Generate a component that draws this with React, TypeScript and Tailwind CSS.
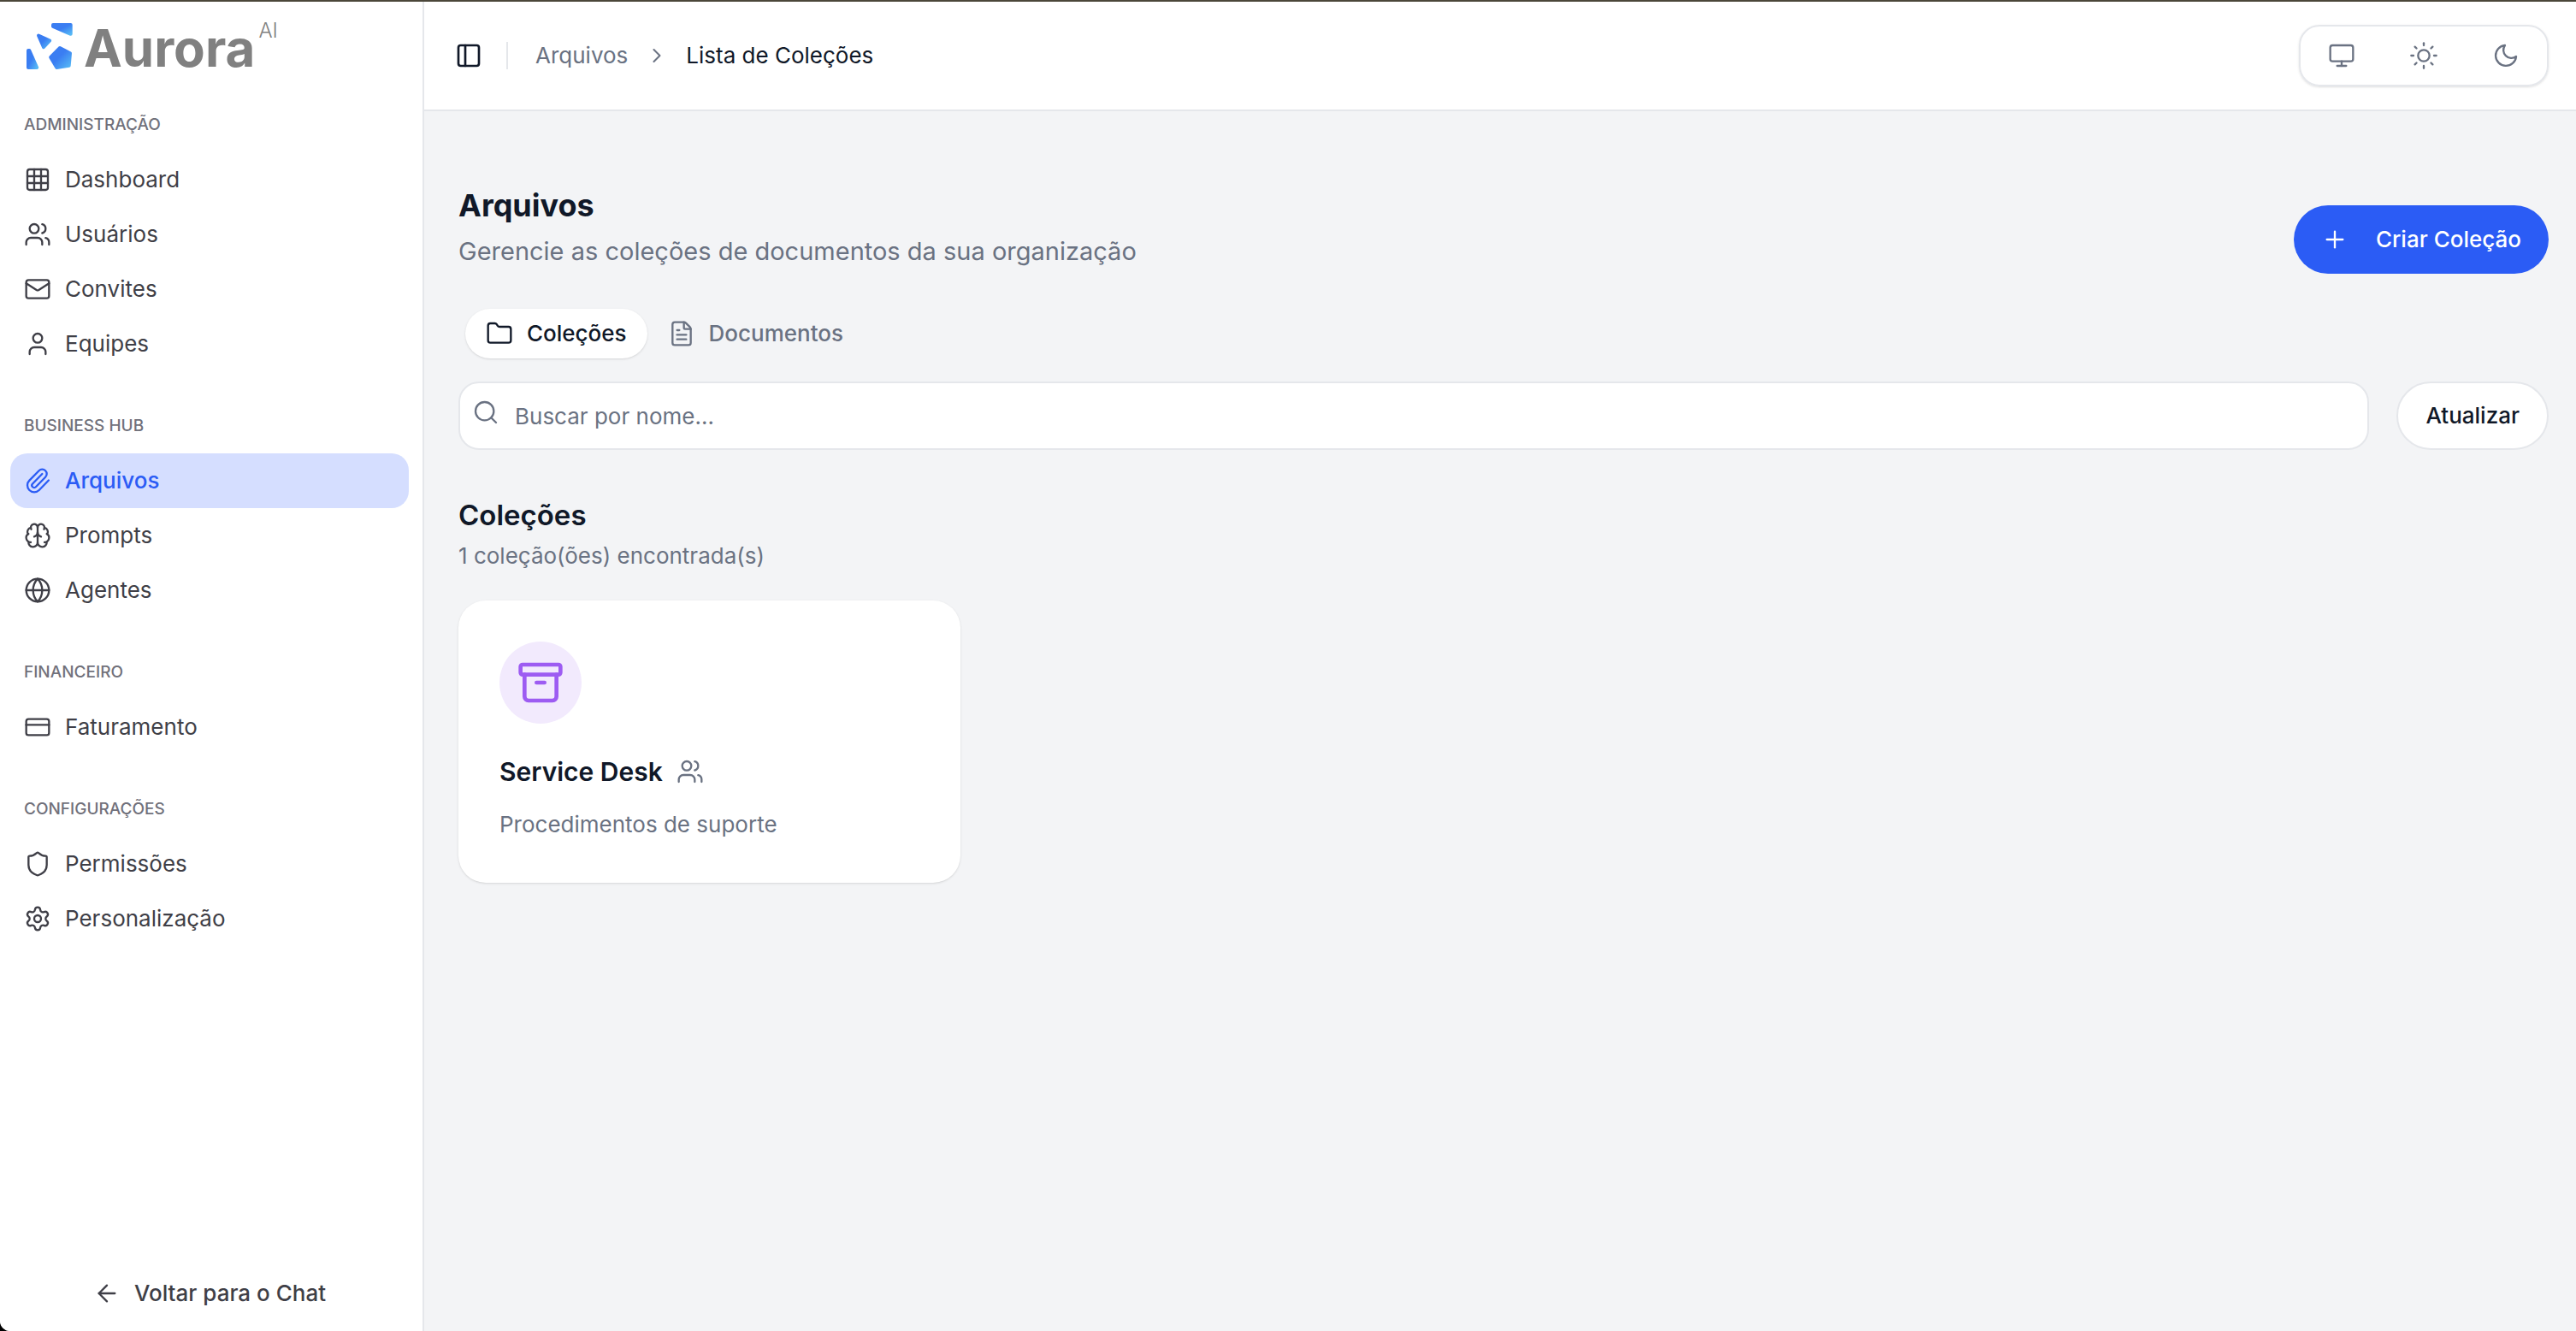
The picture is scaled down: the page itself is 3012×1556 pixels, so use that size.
import type { ComponentType } from "react";
import {
  Archive,
  ArrowLeft,
  Brain,
  ChevronRight,
  CreditCard,
  FileText,
  Folder,
  Globe,
  Grid3x3,
  Mail,
  PanelLeft,
  Paperclip,
  Plus,
  Search,
  Settings,
  Shield,
  User,
  Users,
} from "lucide-react";
import { FiMonitor, FiMoon, FiSun } from "react-icons/fi";

type NavItem = {
  label: string;
  icon: ComponentType<{ className?: string; strokeWidth?: number }>;
  active?: boolean;
};

type NavGroup = {
  title: string;
  items: NavItem[];
};

const GROUPS: NavGroup[] = [
  {
    title: "ADMINISTRAÇÃO",
    items: [
      { label: "Dashboard", icon: Grid3x3 },
      { label: "Usuários", icon: Users },
      { label: "Convites", icon: Mail },
      { label: "Equipes", icon: User },
    ],
  },
  {
    title: "BUSINESS HUB",
    items: [
      { label: "Arquivos", icon: Paperclip, active: true },
      { label: "Prompts", icon: Brain },
      { label: "Agentes", icon: Globe },
    ],
  },
  {
    title: "FINANCEIRO",
    items: [{ label: "Faturamento", icon: CreditCard }],
  },
  {
    title: "CONFIGURAÇÕES",
    items: [
      { label: "Permissões", icon: Shield },
      { label: "Personalização", icon: Settings },
    ],
  },
];

const THEMES = [
  { label: "Sistema", icon: FiMonitor },
  { label: "Claro", icon: FiSun },
  { label: "Escuro", icon: FiMoon },
];

const COLLECTIONS = [{ name: "Service Desk", description: "Procedimentos de suporte" }];

function Logo() {
  return (
    <a href="#" className="flex h-28 items-start px-[30px] pt-6 text-[#808080]">
      <svg viewBox="0 0 56 56" className="size-14 shrink-0" aria-hidden="true">
        <defs>
          <linearGradient id="aurora" x1="0" y1="0" x2="1" y2="1">
            <stop offset="0.45" stopColor="#3a7df2" />
            <stop offset="1" stopColor="#55b8f5" />
          </linearGradient>
        </defs>
        <g
          fill="url(#aurora)"
          stroke="url(#aurora)"
          strokeWidth="4"
          strokeLinejoin="round"
        >
          <path d="M32 3H52.7V13.8L32 5Z" />
          <path d="M15 15.5L28.2 21.5L21 29.2Z" />
          <path d="M3 33H4.300L13.200 53H3Z" />
          <path d="M40 30L52 36.200L50.700 50.800L36.300 53L29.200 41Z" />
        </g>
      </svg>
      <span className="ml-3 font-[Inter] text-[60px] leading-[60px] font-bold">Aurora</span>
      <span className="ml-1 font-[Inter] text-[24px] leading-5 font-light">AI</span>
    </a>
  );
}

function Sidebar() {
  return (
    <aside className="flex w-[496px] shrink-0 flex-col border-r-2 border-gray-200 bg-white">
      <Logo />
      <nav className="flex flex-1 flex-col gap-8 pr-4 pl-3">
        {GROUPS.map((group) => (
          <div key={group.title}>
            <h2 className="flex h-16 items-center px-4 text-[19px] font-medium text-zinc-500">
              {group.title}
            </h2>
            {group.items.map(({ label, icon: Icon, active }) => (
              <a
                key={label}
                href="#"
                className={`flex h-16 items-center gap-4 rounded-[20px] px-4 ${
                  active ? "bg-[#d5deff] font-medium text-[#2b5cf5]" : "text-zinc-700"
                }`}
              >
                <Icon className="size-8" strokeWidth={1.75} />
                {label}
              </a>
            ))}
          </div>
        ))}
      </nav>
      <div className="pt-4 pr-4 pb-3 pl-3">
        <a
          href="#"
          className="flex h-16 items-center justify-center gap-4 font-medium text-zinc-700"
        >
          <ArrowLeft className="size-8" strokeWidth={1.75} />
          Voltar para o Chat
        </a>
      </div>
    </aside>
  );
}

function Header() {
  return (
    <header className="flex h-32 items-center justify-between border-b-2 border-gray-200 bg-white pr-8 pl-9">
      <div className="flex items-center">
        <button type="button" aria-label="Alternar menu" className="mr-7">
          <PanelLeft className="size-8" strokeWidth={2} />
        </button>
        <div className="mr-8 h-8 w-0.5 bg-gray-200" />
        <nav className="flex items-center gap-5">
          <a href="#" className="text-gray-500">
            Arquivos
          </a>
          <ChevronRight className="size-7 text-gray-500" strokeWidth={1.75} />
          <span>Lista de Coleções</span>
        </nav>
      </div>
      <div className="flex h-[72px] rounded-3xl border-2 border-gray-200 shadow-sm">
        {THEMES.map(({ label, icon: Icon }) => (
          <button
            key={label}
            type="button"
            aria-label={label}
            className="flex w-24 items-center justify-center text-gray-500"
          >
            <Icon className="size-8" strokeWidth={1.75} />
          </button>
        ))}
      </div>
    </header>
  );
}

export default function App() {
  return (
    <div className="bg-black">
      <div className="flex min-h-screen overflow-hidden rounded-bl-xl border-t-2 border-[#4b473a] bg-gray-100 font-[Inter,sans-serif] text-[26px] leading-10 text-gray-900">
        <Sidebar />
        <div className="min-w-0 flex-1">
          <Header />
          <main className="pt-20 pr-8 pl-10">
            <div className="flex items-center justify-between">
              <div className="pt-1.5 pb-[26px]">
                <h1 className="text-[36px] leading-[48px] font-bold">Arquivos</h1>
                <p className="text-[29px] leading-[60px] text-gray-500">
                  Gerencie as coleções de documentos da sua organização
                </p>
              </div>
              <button
                type="button"
                className="flex h-20 items-center gap-8 rounded-full bg-[#2b5cf5] px-8 font-medium text-white"
              >
                <Plus className="size-8" strokeWidth={1.75} />
                Criar Coleção
              </button>
            </div>

            <div role="tablist" className="mt-[11px] flex px-2">
              <button
                type="button"
                role="tab"
                aria-selected="true"
                className="flex h-[58px] items-center gap-4 rounded-full bg-white px-6 font-medium shadow"
              >
                <Folder className="size-8" strokeWidth={1.75} />
                Coleções
              </button>
              <button
                type="button"
                role="tab"
                aria-selected="false"
                className="flex h-[58px] items-center gap-4 rounded-full px-6 font-medium text-gray-500"
              >
                <FileText className="size-8" strokeWidth={1.75} />
                Documentos
              </button>
            </div>

            <div className="mt-[27px] flex gap-8">
              <div className="relative flex-1">
                <Search
                  className="absolute top-5 left-4 size-8 text-gray-500"
                  strokeWidth={1.75}
                />
                <input
                  type="text"
                  aria-label="Buscar por nome"
                  placeholder="Buscar por nome..."
                  className="h-20 w-full rounded-3xl border-2 border-gray-200 bg-white pr-6 pl-16 placeholder:text-gray-500"
                />
              </div>
              <button
                type="button"
                className="h-20 rounded-full border-2 border-gray-200 bg-white px-8 font-medium"
              >
                Atualizar
              </button>
            </div>

            <section className="mt-12">
              <h2 className="text-[33px] leading-[56px] font-semibold">Coleções</h2>
              <p className="text-gray-500">1 coleção(ões) encontrada(s)</p>
              <div className="mt-8 grid grid-cols-4 gap-8">
                {COLLECTIONS.map((c) => (
                  <article key={c.name} className="rounded-[32px] bg-white p-12 shadow-sm">
                    <div className="flex size-24 items-center justify-center rounded-full bg-[#f2eafd]">
                      <Archive className="size-14 text-[#9d5cf2]" strokeWidth={2} />
                    </div>
                    <div className="mt-9 flex items-center gap-4">
                      <h3 className="text-[30px] font-semibold">{c.name}</h3>
                      <Users className="size-8 text-gray-500" strokeWidth={1.75} />
                    </div>
                    <p className="mt-[22px] text-gray-500">{c.description}</p>
                  </article>
                ))}
              </div>
            </section>
          </main>
        </div>
      </div>
    </div>
  );
}
